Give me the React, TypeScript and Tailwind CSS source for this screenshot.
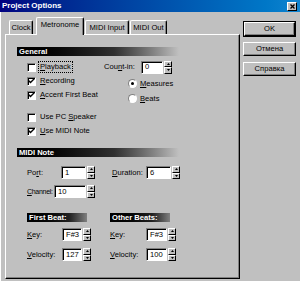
import React from "react";

function SpinBtn({ up }: { up?: boolean }) {
  return (
    <div className="flex-1 flex items-center justify-center bg-[#c0c0c0] border border-t-white border-l-white border-b-black border-r-black">
      <svg width="3" height="2" viewBox="0 0 3 2">
        {up ? <polygon points="1.5,0 3,2 0,2" fill="#000" /> : <polygon points="0,0 3,0 1.5,2" fill="#000" />}
      </svg>
    </div>
  );
}

function Spin() {
  return (
    <div className="flex flex-col w-[8px] h-[13px] ml-[1px] shrink-0">
      <SpinBtn up />
      <SpinBtn />
    </div>
  );
}

function Field({ w, v }: { w: string; v: string }) {
  return (
    <div className={`${w} shrink-0 h-[13px] bg-white border border-t-[#808080] border-l-[#808080] border-b-white border-r-white shadow-[inset_1px_1px_0_#000] flex items-center pl-[3px] leading-none`}>
      {v}
    </div>
  );
}

function Check({ on }: { on?: boolean }) {
  return (
    <div className="w-[9px] h-[9px] shrink-0 bg-white border border-t-[#808080] border-l-[#808080] border-b-white border-r-white shadow-[inset_1px_1px_0_#000] flex items-center justify-center">
      {on && (
        <svg width="7" height="6" viewBox="0 0 7 6">
          <polyline points="0.5,2.5 2.5,4.5 6.5,0.5" fill="none" stroke="#000" strokeWidth="1.4" />
        </svg>
      )}
    </div>
  );
}

function Radio({ on }: { on?: boolean }) {
  return (
    <div className="w-[9px] h-[9px] shrink-0 rounded-full bg-white border border-t-[#808080] border-l-[#808080] border-b-white border-r-white flex items-center justify-center">
      {on && <div className="w-[3px] h-[3px] rounded-full bg-black" />}
    </div>
  );
}

function U({ c }: { c: string }) {
  return <span className="underline underline-offset-1">{c}</span>;
}

function Btn({ children, def }: { children: React.ReactNode; def?: boolean }) {
  return (
    <div className={def ? "border border-black" : ""}>
      <div className="h-[14px] flex items-center justify-center bg-[#c0c0c0] border border-t-white border-l-white border-b-black border-r-black shadow-[inset_-1px_-1px_0_#808080] leading-none">
        {children}
      </div>
    </div>
  );
}

export default function App() {
  return (
    <div className="w-[300px] h-[281px] bg-[#c0c0c0] flex flex-col font-['Liberation_Sans',Arial,sans-serif] text-[7.6px] text-black overflow-hidden">
      {/* Title bar */}
      <div className="h-[12px] flex items-center justify-between pl-[2px] pr-[3px] bg-linear-to-r from-[#000080] to-[#1084d0]">
        <span className="text-white font-bold leading-none text-[8px]">Project Options</span>
        <div className="w-[10px] h-[9px] bg-[#c0c0c0] border border-t-white border-l-white border-b-black border-r-black flex items-center justify-center">
          <svg width="5" height="5" viewBox="0 0 5 5">
            <path d="M0.5 0.5 L4.5 4.5 M4.5 0.5 L0.5 4.5" stroke="#000" strokeWidth="1.3" />
          </svg>
        </div>
      </div>

      <div className="flex flex-1 border-l border-white">
        {/* Left: tabs + panel */}
        <div className="w-[239px] pl-[4px] pt-[5px] flex flex-col">
          <div className="h-[17px] flex items-end pl-[4px]">
            <div className="w-[24px] h-[14px] flex items-center justify-center border-t border-l border-white border-r border-r-black shadow-[inset_-1px_0_0_#808080] rounded-t-[2px] leading-none">
              Clock
            </div>
            <div className="ml-[3px] w-[48px] h-[18px] -mb-px relative z-10 bg-[#c0c0c0] flex items-center justify-center border-t border-l border-white border-r border-r-black shadow-[inset_-1px_0_0_#808080] rounded-t-[2px] leading-none pb-[3px]">
              Metronome
            </div>
            <div className="ml-[1px] w-[44px] h-[14px] flex items-center justify-center border-t border-l border-white border-r border-r-black shadow-[inset_-1px_0_0_#808080] rounded-t-[2px] leading-none">
              MIDI Input
            </div>
            <div className="ml-[1px] w-[37px] h-[14px] flex items-center justify-center border-t border-l border-white border-r border-r-black shadow-[inset_-1px_0_0_#808080] rounded-t-[2px] leading-none">
              MIDI Out
            </div>
          </div>

          <div className="w-[235px] h-[245px] border border-t-white border-l-white border-b-black border-r-black shadow-[inset_-1px_-1px_0_#808080] pl-[11px] pt-[12px] flex flex-col">
            {/* General */}
            <div className="h-[9px] w-[216px] bg-linear-to-r from-black via-[#303030] via-45% to-[#c0c0c0] to-75% text-white font-bold flex items-center pl-[2px] leading-none">
              General
            </div>
            <div className="mt-[4px] flex">
              <div className="w-[87px] pl-[10px] flex flex-col">
                <div className="h-[14px] flex items-center gap-[4px]">
                  <Check />
                  <span className="leading-none outline-1 outline-dotted outline-black outline-offset-1">
                    <U c="P" />layback
                  </span>
                </div>
                <div className="h-[14px] flex items-center gap-[4px]">
                  <Check on />
                  <span className="leading-none"><U c="R" />ecording</span>
                </div>
                <div className="h-[14px] flex items-center gap-[4px]">
                  <Check on />
                  <span className="leading-none whitespace-nowrap"><U c="A" />ccent First Beat</span>
                </div>
                <div className="mt-[8px] h-[14px] flex items-center gap-[4px]">
                  <Check />
                  <span className="leading-none whitespace-nowrap">Use PC <U c="S" />peaker</span>
                </div>
                <div className="h-[14px] flex items-center gap-[4px]">
                  <Check on />
                  <span className="leading-none whitespace-nowrap"><U c="U" />se MIDI Note</span>
                </div>
              </div>
              <div className="flex flex-col">
                <div className="h-[14px] flex items-center">
                  <span className="w-[37px] shrink-0 leading-none whitespace-nowrap">Cou<U c="n" />t-in:</span>
                  <Field w="w-[22px]" v="0" />
                  <Spin />
                </div>
                <div className="mt-[2px] h-[15px] flex items-center pl-[24px] gap-[3px]">
                  <Radio on />
                  <span className="leading-none"><U c="M" />easures</span>
                </div>
                <div className="h-[15px] flex items-center pl-[24px] gap-[3px]">
                  <Radio />
                  <span className="leading-none"><U c="B" />eats</span>
                </div>
              </div>
            </div>

            {/* MIDI Note */}
            <div className="mt-[10px] h-[9px] w-[216px] bg-linear-to-r from-black via-[#303030] via-45% to-[#c0c0c0] to-75% text-white font-bold flex items-center pl-[2px] leading-none">
              MIDI Note
            </div>
            <div className="mt-[9px] pl-[10px] h-[13px] flex items-center">
              <span className="w-[34px] shrink-0 leading-none">Po<U c="r" />t:</span>
              <Field w="w-[25px]" v="1" />
              <Spin />
              <span className="ml-[17px] w-[34px] shrink-0 leading-none whitespace-nowrap"><U c="D" />uration:</span>
              <Field w="w-[25px]" v="6" />
              <Spin />
            </div>
            <div className="mt-[6px] pl-[10px] h-[13px] flex items-center">
              <span className="w-[27px] shrink-0 leading-none whitespace-nowrap text-[7px] tracking-[-0.3px]"><U c="C" />hannel:</span>
              <Field w="w-[32px]" v="10" />
              <Spin />
            </div>

            {/* Beats */}
            <div className="mt-[15px] flex">
              <div className="w-[93px] pl-[10px] flex flex-col">
                <div className="h-[9px] w-[60px] bg-linear-to-r from-black via-[#202020] via-70% to-[#808080] text-white font-bold flex items-center pl-[2px] leading-none whitespace-nowrap">
                  First Beat:
                </div>
                <div className="mt-[6px] h-[13px] flex items-center">
                  <span className="w-[35px] shrink-0 leading-none"><U c="K" />ey:</span>
                  <Field w="w-[20px]" v="F#3" />
                  <Spin />
                </div>
                <div className="mt-[7px] h-[13px] flex items-center">
                  <span className="w-[35px] shrink-0 leading-none"><U c="V" />elocity:</span>
                  <Field w="w-[20px]" v="127" />
                  <Spin />
                </div>
              </div>
              <div className="flex flex-col">
                <div className="h-[9px] w-[60px] bg-linear-to-r from-black via-[#202020] via-70% to-[#808080] text-white font-bold flex items-center pl-[2px] leading-none whitespace-nowrap">
                  Other Beats:
                </div>
                <div className="mt-[6px] h-[13px] flex items-center">
                  <span className="w-[36px] shrink-0 leading-none"><U c="K" />ey:</span>
                  <Field w="w-[21px]" v="F#3" />
                  <Spin />
                </div>
                <div className="mt-[7px] h-[13px] flex items-center">
                  <span className="w-[36px] shrink-0 leading-none"><U c="V" />elocity:</span>
                  <Field w="w-[21px]" v="100" />
                  <Spin />
                </div>
              </div>
            </div>
          </div>
        </div>

        {/* Right: buttons */}
        <div className="ml-[3px] w-[53px] pt-[9px] flex flex-col">
          <Btn def>OK</Btn>
          <div className="mt-[5px]">
            <Btn>Отмена</Btn>
          </div>
          <div className="mt-[6px]">
            <Btn>Справка</Btn>
          </div>
        </div>
      </div>
    </div>
  );
}
